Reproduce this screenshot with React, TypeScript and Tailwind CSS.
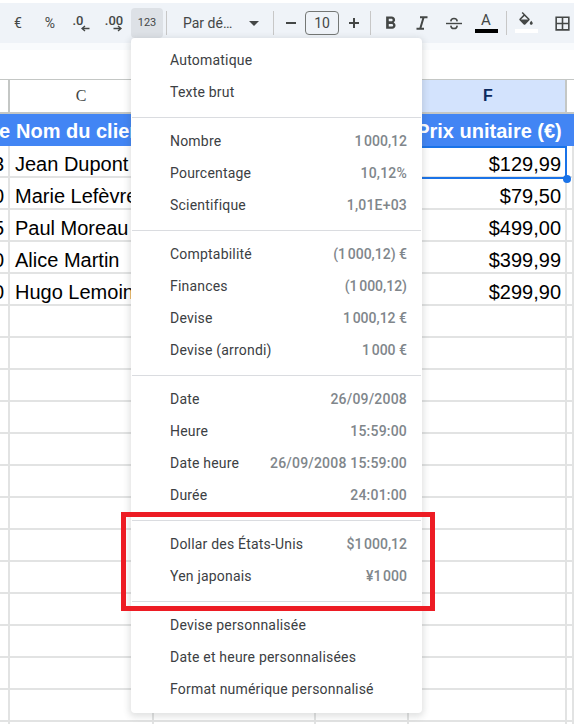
import { MdBorderAll, MdFormatBold } from 'react-icons/md'

const toolbarSep = 'mx-[3px] h-[24px] w-px shrink-0 bg-[#c7c7c7]'
const toolBtn = 'flex h-[30px] w-[32px] shrink-0 items-center justify-center'

function SmallArrow({ dir }: { dir: 'left' | 'right' }) {
  return (
    <svg width="9" height="7" viewBox="0 0 9 7" className="absolute bottom-[6px] right-[8px]" aria-hidden="true">
      {dir === 'left'
        ? <path d="M8.5 3.5H2M4 1 1 3.5 4 6" fill="none" stroke="#444746" strokeWidth="1.4" />
        : <path d="M.5 3.5H7M5 1l3 2.5L5 6" fill="none" stroke="#444746" strokeWidth="1.4" />}
    </svg>
  )
}

function ItalicIcon() {
  return (
    <svg width="12" height="14" viewBox="0 0 12 14" aria-hidden="true">
      <path d="M4 1.2h7.5M.5 12.8H8M7.6 1.2 4.2 12.8" fill="none" stroke="#444746" strokeWidth="2" />
    </svg>
  )
}

function StrikeIcon() {
  return (
    <svg width="16" height="13" viewBox="0 0 16 13" aria-hidden="true">
      <path d="M0 6.5h16" fill="none" stroke="#444746" strokeWidth="1.4" />
      <path d="M4.8 4.4C5 .4 11 .4 11.2 4.4M4.8 8.6C5 12.6 11 12.6 11.2 8.6" fill="none" stroke="#444746" strokeWidth="1.5" />
    </svg>
  )
}

function FillIcon() {
  return (
    <svg width="18" height="13.5" viewBox="0 0 24 18" aria-hidden="true">
      <path fill="#444746" d="M16.56 8.94L7.62 0 6.21 1.41l2.38 2.38-5.15 5.15c-.59.59-.59 1.54 0 2.12l5.5 5.5c.29.29.68.44 1.06.44s.77-.15 1.06-.44l5.5-5.5c.59-.58.59-1.53 0-2.12zM5.21 10L10 5.21 14.79 10H5.21zM19 11.5s-2 2.17-2 3.5c0 1.1.9 2 2 2s2-.9 2-2c0-1.33-2-3.5-2-3.5z" />
    </svg>
  )
}

function Toolbar() {
  return (
    <div className="flex h-[40px] items-center bg-[#eff3f8] pl-[2px] font-['Roboto',sans-serif] text-[#444746]">
      <div className={`${toolBtn} text-[14px]`}>€</div>
      <div className={`${toolBtn} text-[14px]`}>%</div>
      <div className="relative flex h-[30px] w-[32px] shrink-0 items-start justify-center pt-[5px] pr-[8px] text-[13px] leading-[15px] font-medium">
        .0
        <SmallArrow dir="left" />
      </div>
      <div className="relative flex h-[30px] w-[32px] shrink-0 items-start justify-center pt-[5px] text-[13px] leading-[15px] font-medium">
        .00
        <SmallArrow dir="right" />
      </div>
      <div className={`${toolBtn} ml-[1px] rounded-[4px] bg-[#dde1e6] text-[11px]`}>123</div>
      <div className={toolbarSep} />
      <div className="flex h-[30px] w-[100px] shrink-0 items-center pl-[13px] text-[14px]">
        <span className="w-[60px] whitespace-nowrap">Par dé…</span>
        <span className="ml-[6px] h-0 w-0 border-x-[5px] border-t-[5px] border-x-transparent border-t-[#444746]" />
      </div>
      <div className={toolbarSep} />
      <div className="flex h-[30px] w-[27px] shrink-0 items-center justify-center">
        <span className="h-[1.5px] w-[10px] bg-[#444746]" />
      </div>
      <div className="ml-[1px] flex h-[24px] w-[34px] shrink-0 items-center justify-center rounded-[4px] border border-[#747775] text-[14px]">10</div>
      <div className="relative flex h-[30px] w-[30px] shrink-0 items-center justify-center">
        <span className="h-[1.5px] w-[10px] bg-[#444746]" />
        <span className="absolute h-[10px] w-[1.5px] bg-[#444746]" />
      </div>
      <div className={`${toolbarSep} ml-[1px]`} />
      <div className={toolBtn}><MdFormatBold size={21} /></div>
      <div className={toolBtn}><ItalicIcon /></div>
      <div className={toolBtn}><StrikeIcon /></div>
      <div className="flex h-[30px] w-[32px] shrink-0 flex-col items-center">
        <span className="mt-[3px] text-[15px] leading-[18px]">A</span>
        <span className="h-[4px] w-[23px] bg-black" />
      </div>
      <div className={`${toolbarSep} ml-[4px]`} />
      <div className="flex h-[30px] w-[32px] shrink-0 flex-col items-center">
        <div className="mt-[3.5px] h-[13.5px]"><FillIcon /></div>
        <span className="mt-[4px] h-[4px] w-[23px] bg-white" />
      </div>
      <div className={`${toolBtn} ml-[4px]`}><MdBorderAll size={19} /></div>
    </div>
  )
}

const rowsData = [
  { left: '3', name: 'Jean Dupont', price: '$129,99' },
  { left: '0', name: 'Marie Lefèvre', price: '$79,50' },
  { left: '5', name: 'Paul Moreau', price: '$499,00' },
  { left: '0', name: 'Alice Martin', price: '$399,99' },
  { left: '0', name: 'Hugo Lemoine', price: '$299,90' },
]

const gridCols = 'grid grid-cols-[10px_144px_162px_93px_158px_1fr]'
const cell = 'relative flex h-[32px] items-center overflow-hidden whitespace-nowrap border-r-2 border-b-2 border-[#e2e3e3] pt-[5px] text-[20px] text-black'

function Sheet() {
  return (
    <div className="font-['Liberation_Sans',Arial,sans-serif]">
      <div className={`${gridCols} h-[35px] border-t border-[#c4c7c5]`}>
        <div className="border-r-2 border-b-2 border-[#c4c7c5]" />
        <div className="flex items-center justify-center border-r-2 border-b-2 border-[#c4c7c5] font-['Liberation_Serif',serif] text-[16px] text-[#444746]">C</div>
        <div className="border-r-2 border-b-2 border-[#c4c7c5]" />
        <div className="border-b-2 border-[#c4c7c5]" />
        <div className="flex items-center justify-center border-x-2 border-b-2 border-[#c4c7c5] bg-[#d3e3fd] text-[16px] font-bold text-[#0b2a5e]">F</div>
        <div className="border-b-2 border-[#c4c7c5]" />
      </div>
      <div className={`${gridCols} h-[32px] bg-[#4285f4] pt-[1px] text-[20px] font-bold text-white`}>
        <div className="flex items-center justify-end overflow-hidden">e</div>
        <div className="flex items-center whitespace-nowrap pl-[6px]">Nom du client</div>
        <div />
        <div />
        <div className="flex items-center justify-center whitespace-nowrap pl-[2px]">Prix unitaire (€)</div>
        <div />
      </div>
      {rowsData.map((row) => (
        <div key={row.name} className={gridCols}>
          <div className={`${cell} justify-end pr-[4px]`}>{row.left}</div>
          <div className={`${cell} pl-[5px]`}>{row.name}</div>
          <div className={cell} />
          <div className={cell} />
          <div className={`${cell} justify-end pr-[4px]`}>{row.price}</div>
          <div className={cell} />
        </div>
      ))}
      {Array.from({ length: 14 }, (_, i) => (
        <div key={i} className={gridCols}>
          <div className={cell} />
          <div className={cell} />
          <div className={cell} />
          <div className={cell} />
          <div className={cell} />
          <div className={cell} />
        </div>
      ))}
    </div>
  )
}

const menuSections: [string, string][][] = [
  [['Automatique', ''], ['Texte brut', '']],
  [['Nombre', '1\u202f000,12'], ['Pourcentage', '10,12%'], ['Scientifique', '1,01E+03']],
  [['Comptabilité', '(1\u202f000,12) €'], ['Finances', '(1\u202f000,12)'], ['Devise', '1\u202f000,12 €'], ['Devise (arrondi)', '1\u202f000 €']],
  [['Date', '26/09/2008'], ['Heure', '15:59:00'], ['Date heure', '26/09/2008 15:59:00'], ['Durée', '24:01:00']],
  [['Dollar des États-Unis', '$1\u202f000,12'], ['Yen japonais', '¥1\u202f000']],
  [['Devise personnalisée', ''], ['Date et heure personnalisées', ''], ['Format numérique personnalisé', '']],
]

function FormatMenu() {
  return (
    <div className="absolute left-[131px] top-[38px] w-[291px] rounded-[4px] bg-white pt-[7px] pb-[7px] font-['Roboto',sans-serif] shadow-[0_2px_6px_2px_rgba(60,64,67,0.15)]">
      {menuSections.map((section, i) => (
        <div key={section[0][0]}>
          {i > 0 && <div className="mx-[1px] my-[8px] h-px bg-[#dadce0]" />}
          {section.map(([label, sample]) => (
            <div key={label} className="flex h-[32px] items-center justify-between pb-[2px] pl-[39px] pr-[15px] text-[14px] tracking-[0.2px] text-[#3c4043]">
              <span>{label}</span>
              {sample && <span className="font-medium text-[#80868b]">{sample}</span>}
            </div>
          ))}
        </div>
      ))}
    </div>
  )
}

export default function App() {
  return (
    <div className="relative h-[724px] w-[574px] overflow-hidden bg-white">
      <div className="h-[3px]" />
      <Toolbar />
      <div className="h-[7px] bg-[#f9fbfd]" />
      <div className="h-[29px]" />
      <Sheet />
      <div className="absolute left-[409px] top-[146px] h-[33px] w-[158px] border-2 border-[#1a73e8]" />
      <span className="absolute left-[563px] top-[175px] h-[8px] w-[8px] rounded-full bg-[#1a73e8]" />
      <FormatMenu />
      <div className="absolute left-[121px] top-[512px] h-[99px] w-[314px] border-[5px] border-[#ed1c24]" />
    </div>
  )
}
